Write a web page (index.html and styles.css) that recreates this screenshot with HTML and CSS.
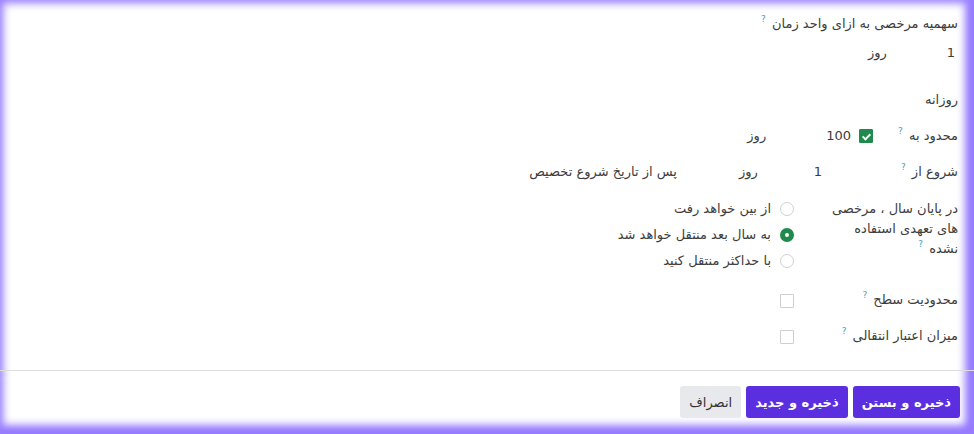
FILE: index.html
```html
<!DOCTYPE html>
<html lang="fa" dir="rtl">
<head>
    <meta charset="UTF-8">
    <meta name="viewport" content="width=device-width, initial-scale=1.0">
    <title>قانون تخصیص</title>
    <link rel="stylesheet" href="styles.css">
</head>
<body>
    <div id="frame">
        <div class="sheet">
            <div class="title">سهمیه مرخصی به ازای واحد زمان <sup class="tip">?</sup></div>
            <div class="qty"><span class="num">1</span><span class="unit">روز</span></div>
            <div class="freq">روزانه</div>

            <div class="row r-cap">
                <div class="lbl">محدود به <sup class="tip">?</sup></div>
                <span class="check on"></span>
                <span class="cap-num">100</span>
                <span class="cap-unit">روز</span>
            </div>

            <div class="row r-start">
                <div class="lbl">شروع از <sup class="tip">?</sup></div>
                <span class="num">1</span>
                <span class="start-unit">روز</span>
                <span class="start-after">پس از تاریخ شروع تخصیص</span>
            </div>

            <div class="row r-carry">
                <div class="lbl">در پایان سال ، مرخصی های تعهدی استفاده نشده <sup class="tip">?</sup></div>
                <div class="radios">
                    <label class="opt"><span class="radio"></span>از بین خواهد رفت</label>
                    <label class="opt"><span class="radio on"></span>به سال بعد منتقل خواهد شد</label>
                    <label class="opt"><span class="radio"></span>با حداکثر منتقل کنید</label>
                </div>
            </div>

            <div class="row r-level">
                <div class="lbl">محدودیت سطح <sup class="tip">?</sup></div>
                <span class="check"></span>
            </div>

            <div class="row r-valid">
                <div class="lbl">میزان اعتبار انتقالی <sup class="tip">?</sup></div>
                <span class="check"></span>
            </div>
        </div>

        <div class="footer">
            <button class="btn primary">ذخیره و بستن</button>
            <button class="btn primary">ذخیره و جدید</button>
            <button class="btn">انصراف</button>
        </div>
    </div>
</body>
</html>
```

FILE: styles.css
```css
html, body {
    margin: 0;
    padding: 0;
    background: #fff;
}
body {
    font-family: "DejaVu Sans", "Noto Sans", sans-serif;
    font-size: 13px;
    color: #3d3d3d;
}
#frame {
    height: 434px;
    box-sizing: border-box;
    box-shadow: inset 0 0 8px 3px #9a80ff, inset -6px -6px 10px 2px #8c6eff;
    overflow: hidden;
}
.sheet {
    padding: 14px 16px 0 14px;
    height: 356px;
}
.title, .qty, .freq, .row {
    line-height: 20px;
}
.tip {
    color: #3f9ec0;
    font-size: 9px;
    vertical-align: 6px;
    line-height: 0;
    margin-right: 2px;
}
.qty {
    margin-top: 9px;
    display: flex;
}
.qty .num {
    padding-right: 3px;
}
.qty .unit {
    margin-right: 60px;
}
.freq {
    margin-top: 27px;
}
.row {
    display: flex;
    align-items: flex-start;
}
.lbl {
    flex: none;
}
.check {
    display: inline-block;
    width: 12px;
    height: 12px;
    border: 1px solid #cfcfcf;
    border-radius: 1px;
    margin-top: 3px;
    position: relative;
    box-sizing: content-box;
}
.check.on {
    background: #1f8a4c;
    border-color: #1f8a4c;
}
.check.on::after {
    content: "";
    position: absolute;
    left: 4px;
    top: 2px;
    width: 3px;
    height: 6px;
    border: solid #fff;
    border-width: 0 2px 2px 0;
    transform: rotate(45deg);
}

.r-cap {
    margin-top: 16px;
}
.r-cap .lbl {
    width: 85px;
}
.cap-num {
    margin-right: 8px;
}
.cap-unit {
    margin-right: 60px;
}

.r-start {
    margin-top: 16px;
}
.r-start .lbl {
    width: 136px;
}
.start-unit {
    margin-right: 56px;
}
.start-after {
    margin-right: 62px;
}

.r-carry {
    margin-top: 17px;
}
.r-carry .lbl {
    width: 128px;
    margin-left: 36px;
}
.radios {
    margin-top: -3px;
}
.opt {
    display: flex;
    align-items: center;
    height: 26px;
}
.radio {
    width: 12px;
    height: 12px;
    border: 1px solid #d0d0d0;
    border-radius: 50%;
    margin-left: 9px;
    box-sizing: content-box;
}
.radio.on {
    width: 4px;
    height: 4px;
    border: 5px solid #1f8a4c;
}

.r-level {
    margin-top: 16px;
}
.r-valid {
    margin-top: 16px;
}
.r-level .lbl, .r-valid .lbl {
    width: 164px;
}
.r-level .check, .r-valid .check {
    margin-top: 4px;
}

.footer {
    border-top: 1px solid #dcdcdc;
    padding: 15px 14px 0;
    display: flex;
    gap: 5px;
}
.btn {
    font-family: inherit;
    font-size: 13px;
    height: 32px;
    padding: 0 9px;
    border: 0;
    border-radius: 3px;
    background: #e7e9ed;
    color: #333;
}
.btn.primary {
    background: #5b2fe0;
    color: #fff;
    font-weight: bold;
}
```
